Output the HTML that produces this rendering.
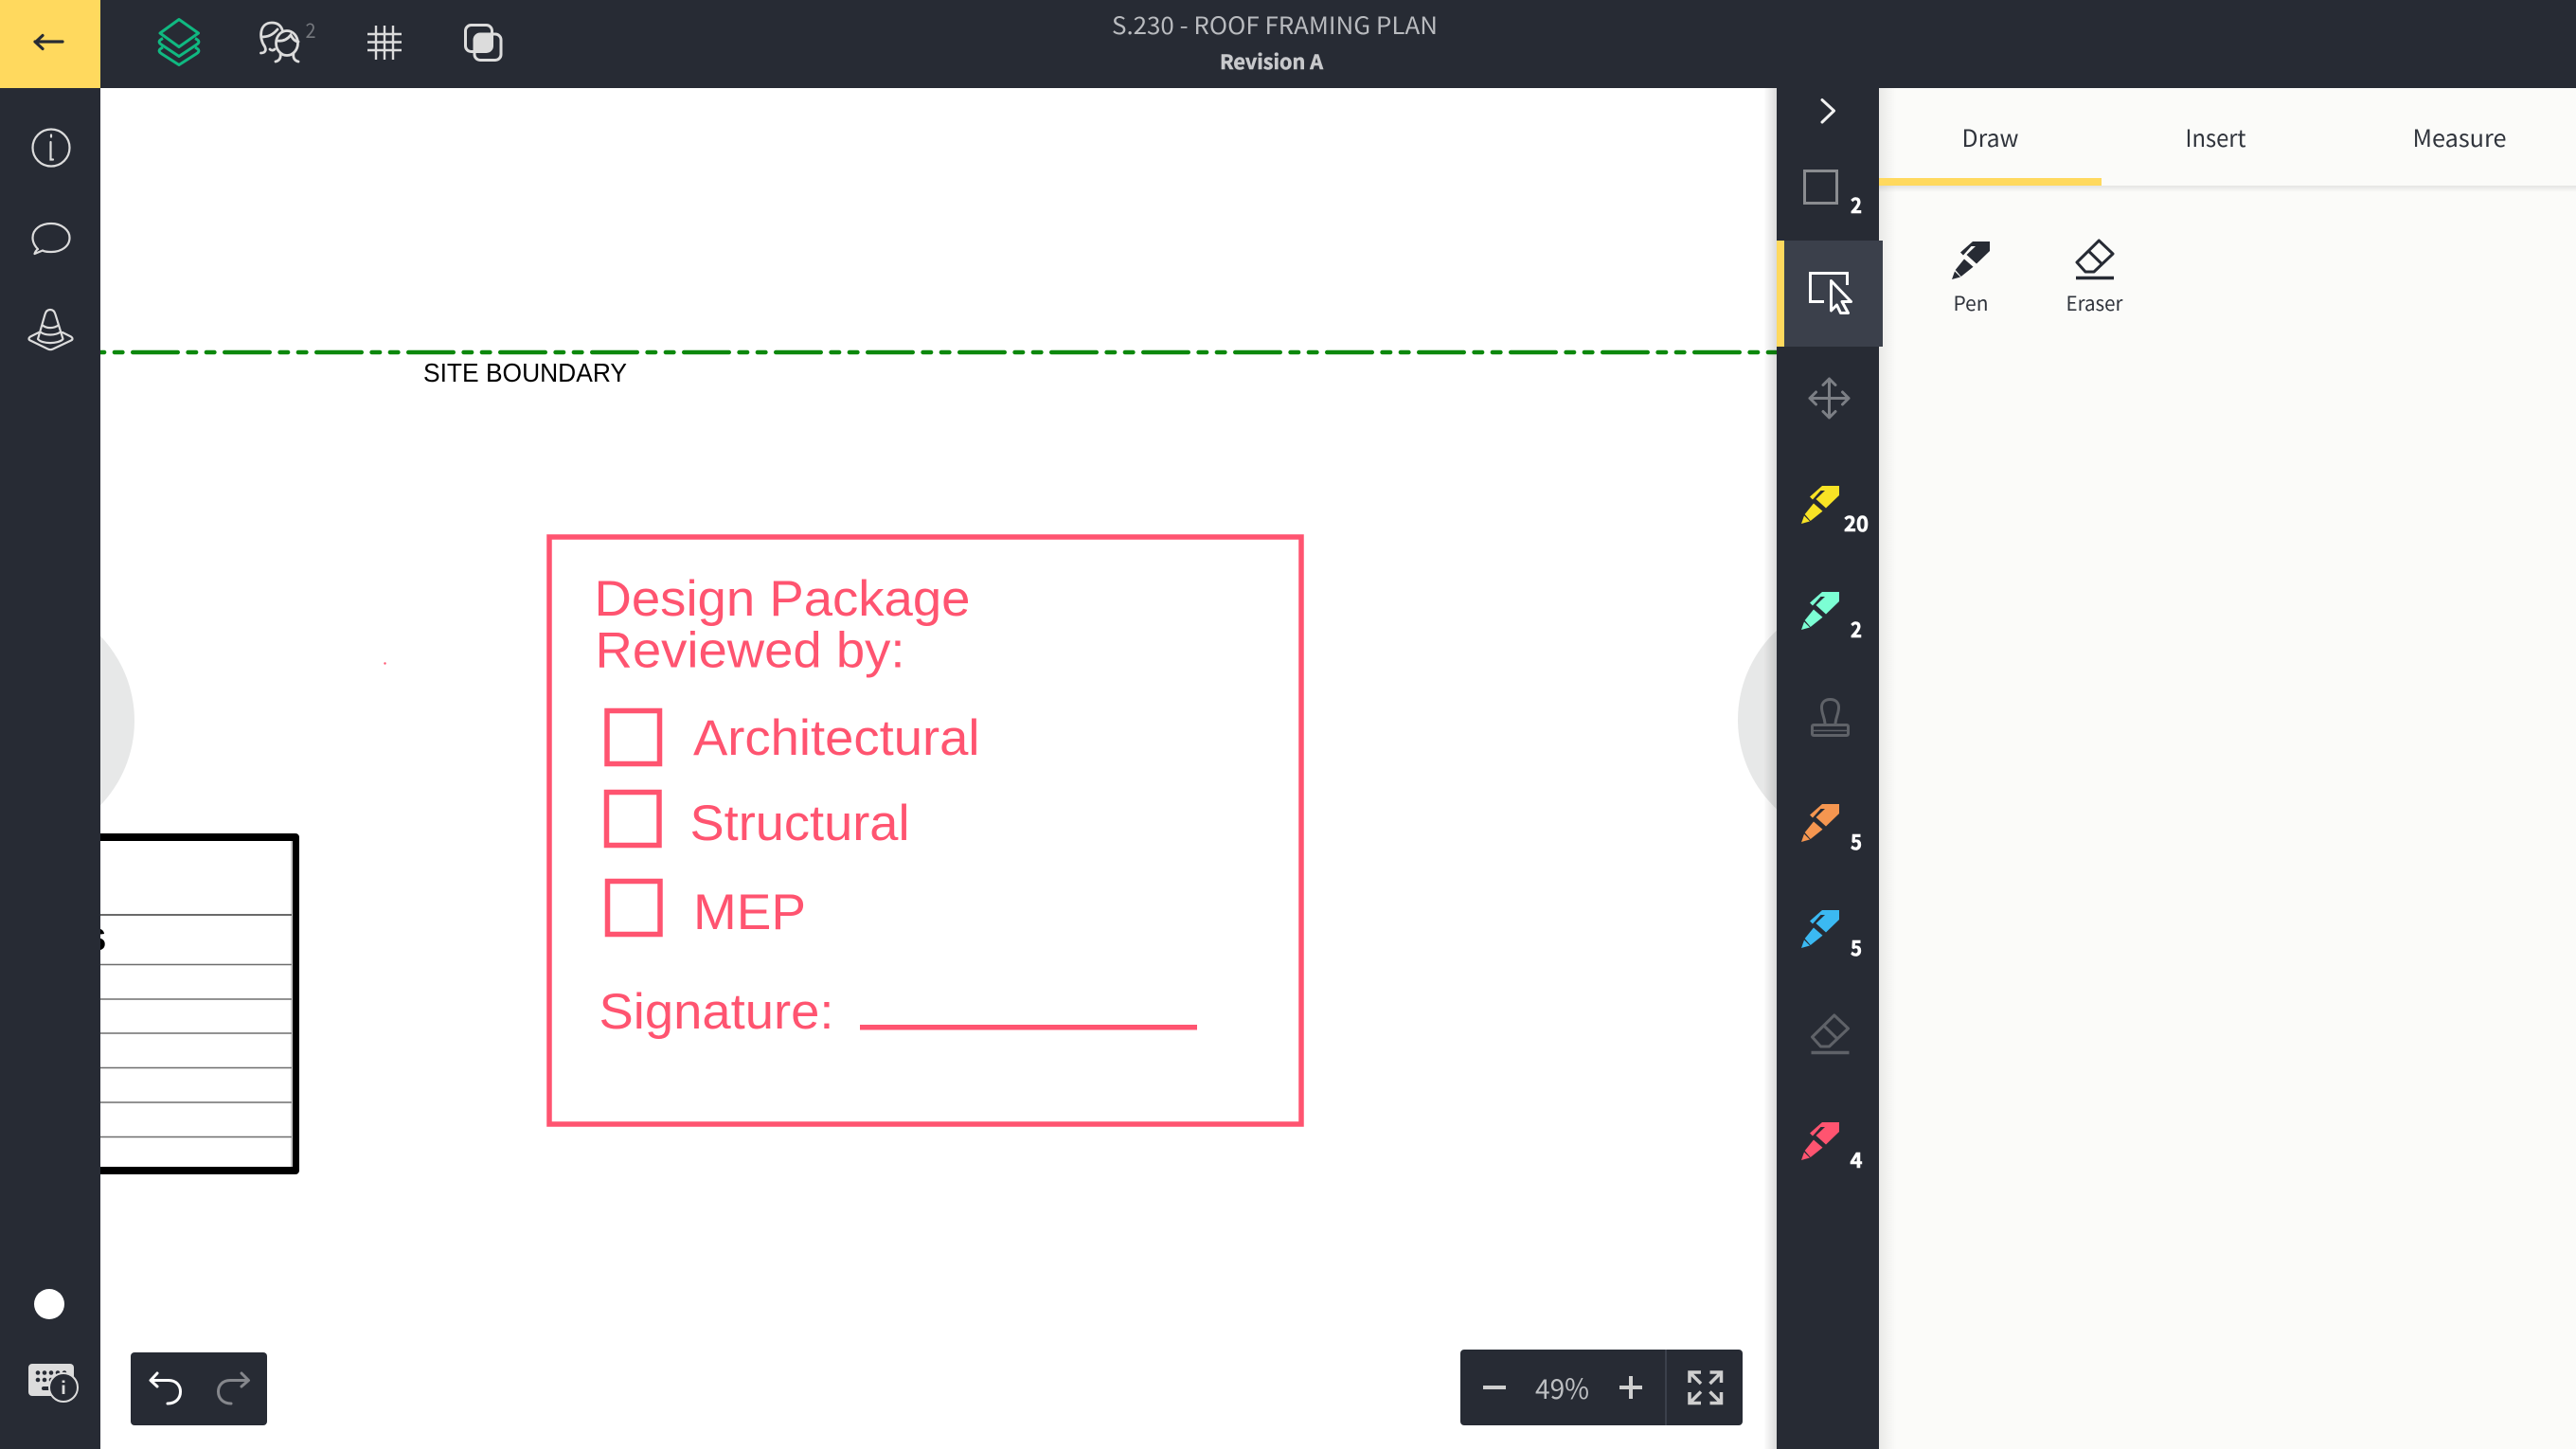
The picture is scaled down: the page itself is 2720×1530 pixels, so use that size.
<!DOCTYPE html>
<html><head><meta charset="utf-8"><title>S.230 - ROOF FRAMING PLAN</title>
<style>html,body{margin:0;padding:0;background:#fff;width:2720px;height:1530px;overflow:hidden}svg{display:block}
.u{font-family:"Noto Sans CJK JP","Liberation Sans",sans-serif}
.l{font-family:"Liberation Sans",sans-serif}
.r{font-family:"Liberation Sans",sans-serif;font-size:53px;fill:#ff5470}
.n{font-family:"Noto Sans CJK JP","Liberation Sans",sans-serif;font-weight:700;font-size:22px;fill:#fff;stroke:#fff;stroke-width:.6px}
</style></head><body>
<svg xmlns="http://www.w3.org/2000/svg" width="2720" height="1530" viewBox="0 0 2720 1530">
<defs>
<linearGradient id="sl" x1="0" x2="1" y1="0" y2="0"><stop offset="0" stop-color="#000" stop-opacity="0"/><stop offset="1" stop-color="#000" stop-opacity=".14"/></linearGradient>
<linearGradient id="sr" x1="0" x2="1" y1="0" y2="0"><stop offset="0" stop-color="#000" stop-opacity=".07"/><stop offset="1" stop-color="#000" stop-opacity="0"/></linearGradient>
<linearGradient id="sb" x1="0" x2="0" y1="0" y2="1"><stop offset="0" stop-color="#000" stop-opacity=".09"/><stop offset="1" stop-color="#000" stop-opacity="0"/></linearGradient>
<g id="pen"><path d="M22 0H40V10L26 23.500 15.500 14 25 5H20.500L12 14.500 9 11.500Z"/><path d="M13 18.500 22.500 26.700 9.700 37 3.700 30Z"/><path d="M0 40 3 31.500 9 37.500Z"/></g>
<g id="er" fill="none" stroke-width="3" stroke-linejoin="round"><path d="M24.300 1 39 15 19 34H10L1 24Z"/><path d="M13.300 12 27.600 26"/><path d="M0 40.500H40" stroke-width="3.500"/></g>
</defs>

<!-- canvas -->
<rect width="2720" height="1530" fill="#fff"/>
<circle cx="13" cy="761" r="129" fill="#e7e8e8"/>
<circle cx="1964" cy="760" r="129" fill="#e7e8e8"/>
<path d="M43.250 372H1876" stroke="#0c880c" stroke-width="4.500" stroke-linecap="round" fill="none" stroke-dasharray="47.500 10.830 8.500 10.830 8.500 10.840"/>
<text class="l" x="447" y="403" font-size="27.500" fill="#000" textLength="215" lengthAdjust="spacingAndGlyphs">SITE BOUNDARY</text>
<circle cx="406.500" cy="700.500" r="1.200" fill="#ff5470"/>

<!-- table -->
<path d="M60 884H312V1236H60" fill="none" stroke="#000" stroke-width="8" stroke-linejoin="round"/>
<rect x="307" y="888" width="2" height="344" fill="#c8c8c8"/>
<path d="M60 966H308" stroke="#111" stroke-width="1.300"/>
<path d="M60 1018.500H308M60 1055H308M60 1091H308M60 1127.500H308M60 1164H308M60 1200.500H308" stroke="#6e6e6e" stroke-width="1.600"/>
<text class="l" x="90" y="1003.500" font-size="33" font-weight="700" fill="#000">S</text>

<!-- stamp -->
<rect x="580" y="567" width="794" height="620" fill="none" stroke="#ff5470" stroke-width="5.500"/>
<text class="r" x="627.500" y="650" textLength="397" lengthAdjust="spacingAndGlyphs">Design Package</text>
<text class="r" x="628.500" y="704.500" textLength="327" lengthAdjust="spacingAndGlyphs">Reviewed by:</text>
<g fill="none" stroke="#ff5470" stroke-width="5.500">
<rect x="641" y="750.500" width="55.500" height="56"/>
<rect x="640.500" y="836.500" width="55.500" height="56"/>
<rect x="641.500" y="930.500" width="55.500" height="56"/>
</g>
<text class="r" x="732" y="797" textLength="302.500" lengthAdjust="spacingAndGlyphs">Architectural</text>
<text class="r" x="728.500" y="887" textLength="232" lengthAdjust="spacingAndGlyphs">Structural</text>
<text class="r" x="732" y="981" textLength="119" lengthAdjust="spacingAndGlyphs">MEP</text>
<text class="r" x="632.500" y="1086" textLength="248" lengthAdjust="spacingAndGlyphs">Signature:</text>
<rect x="908" y="1082" width="356" height="5.500" fill="#ff5470"/>

<!-- top bar / left sidebar -->
<rect x="0" y="0" width="2720" height="93" fill="#272b34"/>
<rect x="0" y="0" width="106" height="1530" fill="#272b34"/>
<rect x="0" y="0" width="106" height="93" fill="#ffd95e"/>
<path d="M37 44H66M45 37.500 37.500 44.500 45 51.500" fill="none" stroke="#272b34" stroke-width="3.200" stroke-linecap="round" stroke-linejoin="round"/>

<g fill="none" stroke="#10b981" stroke-width="3" stroke-linejoin="round">
<path d="M189 20.500 209.500 35 189 49.500 169 35Z"/>
<path d="M172 40.500C167 43 167 45 171 47.500L189 59.500 207 47.500C211 45 211 43 206 40.500"/>
<path d="M172 50C167 52.500 167 54.500 171 57L189 68.500 207 57C211 54.500 211 52.500 206 50"/>
</g>

<g fill="none" stroke="#dcdcdc" stroke-width="2.800" stroke-linecap="round">
<path d="M275.500 56C280 56 281.500 53 279.500 49C273 40 274 24 287 24C293 24 297 27 298.500 33"/>
<path d="M276 39C283 39 288 37 293 31"/>
<path d="M285 52C287 54 289 53 290 52"/>
<ellipse cx="303" cy="45.500" rx="11.500" ry="13" fill="#272b34"/>
<path d="M292 43C299 44 304 41 307 37C309 41 312 44 315 44"/>
<path d="M296 56C297 61 295 64 291 65M310 56C309 61 311 64 315 65"/>
</g>
<text class="u" x="322.500" y="40" font-size="21" fill="#75787e" textLength="11" lengthAdjust="spacingAndGlyphs">2</text>

<path d="M397 27V63M406 27V63M415 27V63M388 36H424M388 44.500H424M388 53H424" stroke="#dcdcdc" stroke-width="2.400" fill="none"/>

<rect x="491.500" y="26.500" width="28" height="28" rx="6" fill="none" stroke="#dcdcdc" stroke-width="3"/>
<rect x="501" y="36" width="28" height="27.500" rx="6" fill="none" stroke="#dcdcdc" stroke-width="3"/>
<path d="M506 36H519.500V49C519.500 52 517 54.500 514 54.500H501V41C501 38 503 36 506 36Z" fill="#dcdcdc"/>

<g fill="none" stroke="#dcdcdc" stroke-width="2.200" stroke-linecap="round">
<circle cx="54" cy="156" r="19.500"/>
<path d="M54 142.500V144.500"/>
<path d="M53.500 150V168.500H56"/>
<path d="M40 263C36 259 34.500 255 34.500 251C34.500 242 43 236 54 236C65 236 73.500 243 73.500 251C73.500 260 65 266 54 266C50 266 47.500 266 45 264.500L36.500 268C37.500 265 38.500 264 40 263Z" stroke-linejoin="round"/>
<path d="M47.500 332C48.500 328.500 50.500 327 53 327C55.500 327 57.500 328.500 58.500 332L66.500 358C62 363.500 44 363.500 40 358Z" stroke-linejoin="round"/>
<path d="M45 343.500C49 347 57 347 61.500 343.500M42.500 350.500C48 354.500 58 354.500 64 350.500"/>
<path d="M41 351 32 355.500C30 357 30 358.500 32 359.500L50.500 368.500C52.500 369.500 54 369.500 56 368.500L75 359.500C77 358.500 77 357 75 355.500L66 351" stroke-linejoin="round"/>
</g>

<circle cx="52" cy="1377" r="16" fill="#fff"/>
<rect x="30" y="1440" width="48" height="34" rx="4" fill="#dcdcdc"/>
<g fill="#272b34"><circle cx="40" cy="1449.500" r="2.300"/><circle cx="47" cy="1449.500" r="2.300"/><circle cx="54" cy="1449.500" r="2.300"/><circle cx="61" cy="1449.500" r="2.300"/><circle cx="68" cy="1449.500" r="2.300"/><circle cx="40" cy="1457" r="2.300"/><circle cx="47" cy="1457" r="2.300"/><circle cx="54" cy="1457" r="2.300"/><rect x="44" y="1464" width="9" height="4" rx="2"/></g>
<circle cx="67" cy="1465" r="15" fill="#272b34" stroke="#dcdcdc" stroke-width="2"/>
<path d="M67 1457.500V1460M67 1462.500V1472" stroke="#dcdcdc" stroke-width="2.800" fill="none"/>

<!-- title -->
<text class="u" x="1174" y="36" font-size="25" fill="#b9bbbf" textLength="344" lengthAdjust="spacingAndGlyphs">S.230 - ROOF FRAMING PLAN</text>
<text class="u" x="1288" y="73" font-size="21" font-weight="700" fill="#c8c9cc" stroke="#c8c9cc" stroke-width=".5" textLength="109" lengthAdjust="spacingAndGlyphs">Revision A</text>

<!-- undo / zoom -->
<rect x="138" y="1428" width="144" height="77" rx="4" fill="#272b34"/>
<path d="M166 1450 159 1457.500 166 1464M159.500 1457.500H178C186 1457.500 190.500 1463 190.500 1469.500C190.500 1476 186 1482 177 1482" fill="none" stroke="#fff" stroke-width="3" stroke-linecap="round" stroke-linejoin="round"/>
<path d="M255 1450 262.500 1457.500 255 1464M262 1457.500H243C235 1457.500 230.500 1463 230.500 1469.500C230.500 1476 235 1482 244 1482" fill="none" stroke="#85878c" stroke-width="3" stroke-linecap="round" stroke-linejoin="round"/>

<rect x="1542" y="1425" width="298" height="80" rx="4" fill="#272b34"/>
<rect x="1758" y="1425" width="2" height="80" fill="#3b404b"/>
<path d="M1566 1465H1590M1710 1465H1734M1722 1453V1477" stroke="#cfcfcf" stroke-width="4" fill="none"/>
<text class="u" x="1621" y="1477" font-size="29" fill="#bdbfc2" textLength="57" lengthAdjust="spacingAndGlyphs">49%</text>
<g fill="none" stroke="#cfcfcf" stroke-width="3.500">
<path d="M1784 1460V1449H1796M1784.500 1449.500 1796 1461"/>
<path d="M1817.500 1460V1449H1805.500M1817 1449.500 1805.500 1461"/>
<path d="M1784 1470V1481.500H1796M1784.500 1481 1796 1469.500"/>
<path d="M1817.500 1470V1481.500H1805.500M1817 1481 1805.500 1469.500"/>
</g>

<!-- right panel -->
<rect x="1984" y="93" width="736" height="1437" fill="#fbfbf9"/>
<rect x="1984" y="93" width="18" height="1437" fill="url(#sr)"/>
<rect x="1984" y="196" width="736" height="7" fill="url(#sb)"/>
<rect x="1984" y="188" width="235" height="8" fill="#ffd95e"/>
<text class="u" x="2071.500" y="155" font-size="25" fill="#30343c" textLength="60" lengthAdjust="spacingAndGlyphs">Draw</text>
<text class="u" x="2307.500" y="155" font-size="25" fill="#30343c" textLength="64" lengthAdjust="spacingAndGlyphs">Insert</text>
<text class="u" x="2547.500" y="155" font-size="25" fill="#30343c" textLength="99" lengthAdjust="spacingAndGlyphs">Measure</text>
<use href="#pen" x="2061" y="255" fill="#272b34"/>
<use href="#er" x="2192" y="253" stroke="#272b34"/>
<text class="u" x="2062.500" y="328" font-size="21" fill="#30343c" textLength="37" lengthAdjust="spacingAndGlyphs">Pen</text>
<text class="u" x="2181.500" y="328" font-size="21" fill="#30343c" textLength="60" lengthAdjust="spacingAndGlyphs">Eraser</text>

<!-- rail -->
<rect x="1862" y="93" width="14" height="1437" fill="url(#sl)"/>
<rect x="1876" y="93" width="108" height="1437" fill="#272b34"/>
<path d="M1924 105.500 1936.500 117 1924 129" fill="none" stroke="#f2f2f2" stroke-width="3" stroke-linecap="round" stroke-linejoin="round"/>
<rect x="1905.500" y="180.500" width="34" height="34" fill="none" stroke="#8a8c90" stroke-width="3"/>
<text class="n" x="1954" y="225" textLength="12" lengthAdjust="spacingAndGlyphs">2</text>

<rect x="1876" y="254" width="112" height="112" fill="#3b404b"/>
<rect x="1876" y="254" width="8" height="112" fill="#ffd95e"/>
<path d="M1950.500 301V288.500H1911.500V318.500H1926" fill="none" stroke="#fff" stroke-width="3"/>
<path d="M1933.500 296.500 1954.500 318.500 1945 318.500 1951.500 330.500 1943.500 330.500 1939.500 322 1933.500 328Z" fill="#3b404b" stroke="#fff" stroke-width="3" stroke-linejoin="round"/>

<path d="M1931.500 400V441M1911 420.500H1952M1925 406.500 1931.500 400 1938 406.500M1925 434.500 1931.500 441 1938 434.500M1917.500 414 1911 420.500 1917.500 427M1945.500 414 1952 420.500 1945.500 427" fill="none" stroke="#7c7f85" stroke-width="3" stroke-linecap="round" stroke-linejoin="round"/>

<use href="#pen" x="1902" y="513" fill="#f8e325"/>
<text class="n" x="1947" y="561" textLength="26" lengthAdjust="spacingAndGlyphs">20</text>
<use href="#pen" x="1902" y="625" fill="#7cffd4"/>
<text class="n" x="1954" y="673" textLength="12" lengthAdjust="spacingAndGlyphs">2</text>

<g fill="none" stroke="#5f6268" stroke-width="3">
<path d="M1927 765C1927 758 1923.500 754 1923.500 747C1923.500 741.500 1927 738.500 1932.500 738.500C1938 738.500 1941.500 741.500 1941.500 747C1941.500 754 1938 758 1938 765"/>
<rect x="1913.500" y="765.500" width="38" height="11" rx="1.500"/>
<path d="M1913 771.500H1952" stroke-width="1.500"/>
</g>

<use href="#pen" x="1902" y="849" fill="#f59650"/>
<text class="n" x="1954" y="897" textLength="12" lengthAdjust="spacingAndGlyphs">5</text>
<use href="#pen" x="1902" y="961" fill="#3bb9f2"/>
<text class="n" x="1954" y="1009" textLength="12" lengthAdjust="spacingAndGlyphs">5</text>
<use href="#er" x="1912.500" y="1071" stroke="#5f6268"/>
<use href="#pen" x="1902" y="1185" fill="#ff5470"/>
<text class="n" x="1953.500" y="1233" textLength="13" lengthAdjust="spacingAndGlyphs">4</text>
</svg>
</body></html>
